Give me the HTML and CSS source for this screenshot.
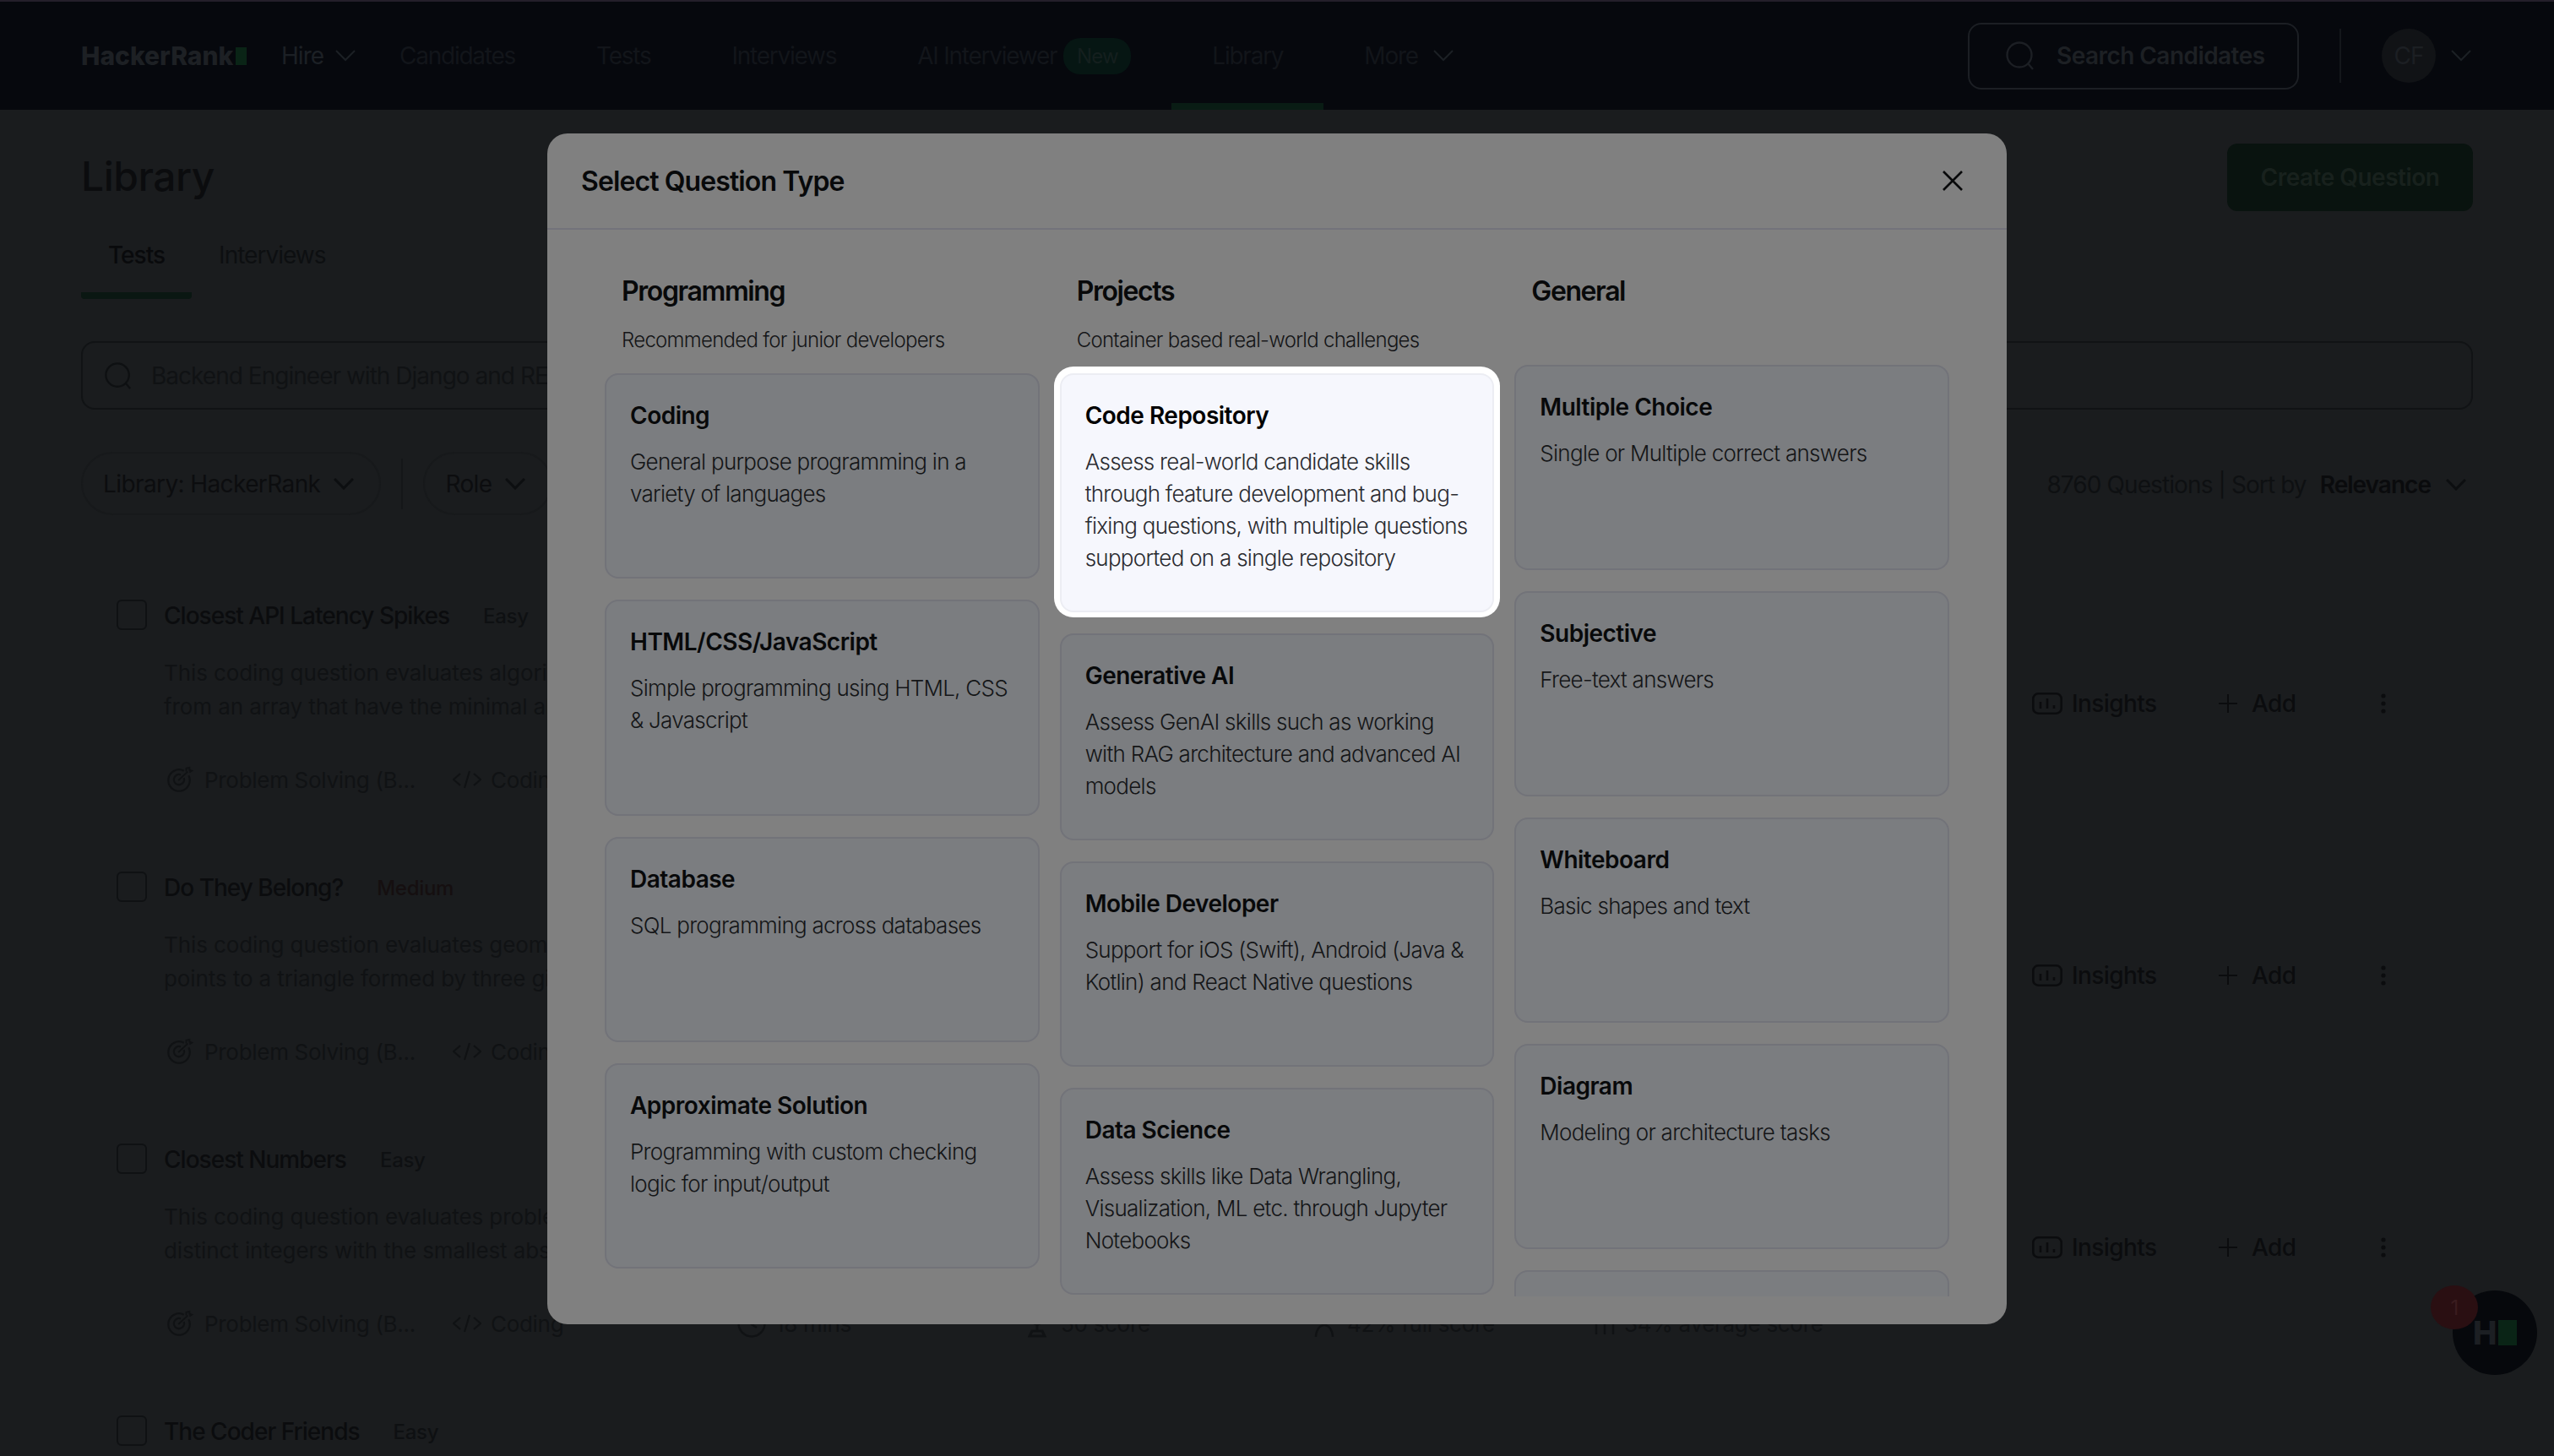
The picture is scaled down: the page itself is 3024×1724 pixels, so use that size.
FILE: index.html
```html
<!DOCTYPE html>
<html lang="en">
<head>
    <meta charset="UTF-8">
    <meta name="viewport" content="width=device-width, initial-scale=1.0">
    <title>Library - HackerRank</title>
    <link rel="stylesheet" href="styles.css">
</head>
<body>
    <svg class="sprite" aria-hidden="true">
        <symbol id="chev" viewBox="0 0 24 14"><path d="M1 1l11 11L23 1" fill="none" stroke="currentColor"/></symbol>
        <symbol id="search" viewBox="0 0 36 36"><circle cx="17" cy="17" r="14.500" fill="none" stroke="currentColor" stroke-width="2.400"/><path d="M27 27l6 7" fill="none" stroke="currentColor" stroke-width="2.400"/></symbol>
        <symbol id="target" viewBox="0 0 34 34"><path d="M28 12a13.500 13.500 0 1 1-6-6" fill="none" stroke="currentColor" stroke-width="2.400"/><path d="M22 15a6.500 6.500 0 1 1-4-4" fill="none" stroke="currentColor" stroke-width="2.400"/><path d="M15 18L27 7M25 7V3l4-1v3l3 1-3 2" fill="none" stroke="currentColor" stroke-width="2"/></symbol>
        <symbol id="code" viewBox="0 0 34 24"><path d="M9 5l-8 7 8 7M25 5l8 7-8 7M20 2l-6 20" fill="none" stroke="currentColor" stroke-width="2.200"/></symbol>
        <symbol id="clock" viewBox="0 0 36 36"><circle cx="18" cy="18" r="15.500" fill="none" stroke="currentColor" stroke-width="2.400"/><path d="M18 9v10l6 4" fill="none" stroke="currentColor" stroke-width="2.400"/></symbol>
        <symbol id="trophy" viewBox="0 0 22 36"><path d="M4 3h14v9a7 7 0 0 1-14 0zM11 19v8M2 33l3-6h12l3 6z" fill="none" stroke="currentColor" stroke-width="3"/></symbol>
        <symbol id="person" viewBox="0 0 24 36"><circle cx="12" cy="10" r="7" fill="none" stroke="currentColor" stroke-width="2.400"/><path d="M2 34a10 14 0 0 1 20 0" fill="none" stroke="currentColor" stroke-width="2.400"/></symbol>
        <symbol id="bars" viewBox="0 0 26 30"><path d="M3 16v12M13 4v24M23 11v17" fill="none" stroke="currentColor" stroke-width="2.400"/></symbol>
        <symbol id="insights" viewBox="0 0 36 26"><rect x="1.300" y="1.300" width="33.400" height="23.400" rx="6" fill="none" stroke="currentColor" stroke-width="2.600"/><path d="M10 11v8M18 7v12M26 15v4" fill="none" stroke="currentColor" stroke-width="2.600"/></symbol>
        <symbol id="plus" viewBox="0 0 24 24"><path d="M12 1v22M1 12h22" fill="none" stroke="currentColor" stroke-width="2"/></symbol>
        <symbol id="kebab" viewBox="0 0 6 24"><circle cx="3" cy="3" r="2.600" fill="currentColor"/><circle cx="3" cy="12" r="2.600" fill="currentColor"/><circle cx="3" cy="21" r="2.600" fill="currentColor"/></symbol>
    </svg>

    <header class="topnav">
        <div class="logo">HackerRank<span class="logo-mark"></span></div>
        <a class="nav-hire">Hire <svg class="chev"><use href="#chev"/></svg></a>
        <a class="nav-item">Candidates</a>
        <a class="nav-item">Tests</a>
        <a class="nav-item">Interviews</a>
        <a class="nav-item">AI Interviewer <span class="pill-new">New</span></a>
        <a class="nav-item active">Library</a>
        <a class="nav-item">More <svg class="chev"><use href="#chev"/></svg></a>
        <div class="nav-right">
            <div class="nav-search"><svg class="nav-search-icon"><use href="#search"/></svg>Search Candidates</div>
            <div class="nav-divider"></div>
            <div class="avatar">CF</div>
            <svg class="chev"><use href="#chev"/></svg>
        </div>
    </header>

    <main class="page">
        <div class="page-head">
            <h1>Library</h1>
            <button class="create-btn">Create Question</button>
        </div>
        <div class="tabs">
            <a class="tab active">Tests</a>
            <a class="tab">Interviews</a>
        </div>
        <div class="lib-search"><svg class="lib-search-icon"><use href="#search"/></svg>Backend Engineer with Django and REST APIs</div>
        <div class="filters">
            <div class="filter">Library: HackerRank <svg class="chev bold"><use href="#chev"/></svg></div>
            <div class="filter-divider"></div>
            <div class="filter">Role <svg class="chev bold"><use href="#chev"/></svg></div>
            <div class="sort">8760 Questions | Sort by <strong>Relevance</strong> <svg class="chev bold"><use href="#chev"/></svg></div>
        </div>

        <div class="q-row">
            <div class="checkbox"></div>
            <div class="q-main">
                <div class="q-title">Closest API Latency Spikes <span class="level">Easy</span></div>
                <p class="q-desc">This coding question evaluates algorithmic skills by finding pairs of elements<br>from an array that have the minimal absolute difference</p>
                <div class="q-meta">
                    <span class="meta-skill"><svg class="ic-target"><use href="#target"/></svg>Problem Solving (B...</span>
                    <span class="meta-type"><svg class="ic-code"><use href="#code"/></svg>Coding</span>
                </div>
            </div>
            <div class="q-actions">
                <span class="action-insights"><svg class="ic-insights"><use href="#insights"/></svg>Insights</span>
                <span class="action-add"><svg class="ic-plus"><use href="#plus"/></svg>Add</span>
                <svg class="ic-kebab"><use href="#kebab"/></svg>
            </div>
        </div>

        <div class="q-row">
            <div class="checkbox"></div>
            <div class="q-main">
                <div class="q-title">Do They Belong? <span class="level medium">Medium</span></div>
                <p class="q-desc">This coding question evaluates geometry skills by checking the relation of two<br>points to a triangle formed by three given vertices</p>
                <div class="q-meta">
                    <span class="meta-skill"><svg class="ic-target"><use href="#target"/></svg>Problem Solving (B...</span>
                    <span class="meta-type"><svg class="ic-code"><use href="#code"/></svg>Coding</span>
                </div>
            </div>
            <div class="q-actions">
                <span class="action-insights"><svg class="ic-insights"><use href="#insights"/></svg>Insights</span>
                <span class="action-add"><svg class="ic-plus"><use href="#plus"/></svg>Add</span>
                <svg class="ic-kebab"><use href="#kebab"/></svg>
            </div>
        </div>

        <div class="q-row">
            <div class="checkbox"></div>
            <div class="q-main">
                <div class="q-title">Closest Numbers <span class="level">Easy</span></div>
                <p class="q-desc">This coding question evaluates problem solving skills by finding pairs of<br>distinct integers with the smallest absolute difference</p>
                <div class="q-meta">
                    <span class="meta-skill"><svg class="ic-target"><use href="#target"/></svg>Problem Solving (B...</span>
                    <span class="meta-type"><svg class="ic-code"><use href="#code"/></svg>Coding</span>
                    <span class="meta-time"><svg class="ic-clock"><use href="#clock"/></svg>18 mins</span>
                    <span class="meta-score"><svg class="ic-trophy"><use href="#trophy"/></svg>50 score</span>
                    <span class="meta-full"><svg class="ic-person"><use href="#person"/></svg>42% full score</span>
                    <span class="meta-avg"><svg class="ic-bars"><use href="#bars"/></svg>34% average score</span>
                </div>
            </div>
            <div class="q-actions">
                <span class="action-insights"><svg class="ic-insights"><use href="#insights"/></svg>Insights</span>
                <span class="action-add"><svg class="ic-plus"><use href="#plus"/></svg>Add</span>
                <svg class="ic-kebab"><use href="#kebab"/></svg>
            </div>
        </div>

        <div class="q-row">
            <div class="checkbox"></div>
            <div class="q-main">
                <div class="q-title">The Coder Friends <span class="level">Easy</span></div>
            </div>
        </div>
    </main>

    <div class="chat-bubble">
        <span class="chat-h">H</span><span class="chat-mark"></span>
        <span class="chat-badge">1</span>
    </div>

    <section class="modal">
        <div class="modal-head">
            <h2>Select Question Type</h2>
            <svg class="modal-close" viewBox="0 0 24 24"><path d="M1 1l22 22M23 1L1 23" fill="none" stroke="currentColor" stroke-width="2.600"/></svg>
        </div>
        <div class="modal-body">
            <div class="type-col">
                <div class="col-head">
                    <h3>Programming</h3>
                    <p>Recommended for junior developers</p>
                </div>
                <div class="type-card">
                    <h4>Coding</h4>
                    <p>General purpose programming in a variety of languages</p>
                </div>
                <div class="type-card tall">
                    <h4>HTML/CSS/JavaScript</h4>
                    <p>Simple programming using HTML, CSS &amp; Javascript</p>
                </div>
                <div class="type-card">
                    <h4>Database</h4>
                    <p>SQL programming across databases</p>
                </div>
                <div class="type-card">
                    <h4>Approximate Solution</h4>
                    <p>Programming with custom checking logic for input/output</p>
                </div>
            </div>
            <div class="type-col">
                <div class="col-head">
                    <h3>Projects</h3>
                    <p>Container based real-world challenges</p>
                </div>
                <div class="type-card spotlight">
                    <h4>Code Repository</h4>
                    <p>Assess real-world candidate skills through feature development and bug-fixing questions, with multiple questions supported on a single repository</p>
                </div>
                <div class="type-card">
                    <h4>Generative AI</h4>
                    <p>Assess GenAI skills such as working with RAG architecture and advanced AI models</p>
                </div>
                <div class="type-card">
                    <h4>Mobile Developer</h4>
                    <p>Support for iOS (Swift), Android (Java &amp; Kotlin) and React Native questions</p>
                </div>
                <div class="type-card">
                    <h4>Data Science</h4>
                    <p>Assess skills like Data Wrangling, Visualization, ML etc. through Jupyter Notebooks</p>
                </div>
            </div>
            <div class="type-col">
                <div class="col-head">
                    <h3>General</h3>
                </div>
                <div class="type-card">
                    <h4>Multiple Choice</h4>
                    <p>Single or Multiple correct answers</p>
                </div>
                <div class="type-card">
                    <h4>Subjective</h4>
                    <p>Free-text answers</p>
                </div>
                <div class="type-card">
                    <h4>Whiteboard</h4>
                    <p>Basic shapes and text</p>
                </div>
                <div class="type-card">
                    <h4>Diagram</h4>
                    <p>Modeling or architecture tasks</p>
                </div>
                <div class="type-card">
                    <h4>File Upload</h4>
                    <p>Candidates upload a file</p>
                </div>
            </div>
        </div>
    </section>
</body>
</html>
```

FILE: styles.css
```css
* {
    box-sizing: border-box;
    letter-spacing: -0.035em;
}
html, body {
    margin: 0;
    height: 100%;
    overflow: hidden;
}
body {
    position: relative;
    font-family: Inter, "Liberation Sans", sans-serif;
    background-color: #1a1c1e;
    color: #0c0d0f;
}
.sprite {
    display: none;
}
.chev {
    width: 24px;
    height: 14px;
    stroke-width: 2;
    color: #1c2025;
}
.chev.bold {
    stroke-width: 3;
    color: #0c0e10;
}

/* top nav */
.topnav {
    display: flex;
    align-items: center;
    height: 130px;
    padding-left: 96px;
    background-color: #06080d;
    border-top: 2px solid #241f2a;
    font-size: 28px;
    letter-spacing: -1.2px;
    color: #12151a;
}
.logo {
    display: flex;
    align-items: center;
    width: 196px;
    font-size: 30px;
    font-weight: 800;
    letter-spacing: 0;
    color: #1d2024;
}
.logo-mark {
    width: 15px;
    height: 21px;
    margin-left: 3px;
    background-color: #0a2416;
}
.nav-hire {
    display: flex;
    align-items: center;
    gap: 14px;
    margin-left: 41px;
    margin-right: 4px;
    color: #1c2025;
}
.nav-item {
    display: flex;
    align-items: center;
    align-self: stretch;
    padding: 0 48px;
    position: relative;
    letter-spacing: -1.25px;
}
.nav-item .chev {
    margin-left: 18px;
}
.nav-item.active::after {
    content: "";
    position: absolute;
    left: 0;
    right: 0;
    bottom: 0;
    height: 8px;
    background-color: #091c14;
}
.pill-new {
    display: inline-flex;
    align-items: center;
    justify-content: center;
    width: 80px;
    height: 43px;
    margin-left: 8px;
    border-radius: 20px;
    background-color: #061613;
    font-size: 24px;
    color: #141f1e;
}
.nav-right {
    display: flex;
    align-items: center;
    margin-left: auto;
    padding-right: 98px;
}
.nav-search {
    display: flex;
    align-items: center;
    width: 392px;
    height: 79px;
    padding-left: 42px;
    border: 2px solid #1c1f24;
    border-radius: 16px;
    font-weight: 600;
    letter-spacing: -0.55px;
    color: #1d2024;
}
.nav-search-icon {
    width: 36px;
    height: 36px;
    margin-right: 25px;
    color: #1c1f24;
}
.nav-divider {
    width: 2px;
    height: 64px;
    margin: 0 48px;
    background-color: #14171b;
}
.avatar {
    display: flex;
    align-items: center;
    justify-content: center;
    width: 64px;
    height: 64px;
    margin-right: 18px;
    border-radius: 50%;
    background-color: #111316;
    color: #1c1f23;
}

/* library page */
.page {
    padding: 40px 96px 0;
}
.page-head {
    display: flex;
    align-items: center;
    justify-content: space-between;
    height: 80px;
}
.page-head h1 {
    margin: -4px 0 0;
    font-size: 48px;
    font-weight: 500;
    letter-spacing: -0.5px;
    color: #0b0c0e;
}
.create-btn {
    width: 291px;
    height: 80px;
    border: none;
    border-radius: 12px;
    background-color: #09130f;
    font-family: inherit;
    font-size: 28px;
    font-weight: 600;
    letter-spacing: -0.5px;
    color: #18211d;
}
.tabs {
    display: flex;
    height: 92px;
    margin-top: 12px;
    font-size: 28px;
}
.tab {
    padding: 23px 32px 0;
    color: #0d0f11;
}
.tab.active {
    font-weight: 500;
    color: #090a0c;
    border-bottom: 8px solid #0a1712;
    border-radius: 0 0 4px 4px;
}
.lib-search {
    display: flex;
    align-items: center;
    height: 81px;
    margin-top: 50px;
    padding-left: 25px;
    border: 2px solid #111315;
    border-radius: 16px;
    font-size: 28px;
    color: #101214;
}
.lib-search-icon {
    width: 34px;
    height: 34px;
    margin-right: 22px;
    color: #0e1012;
}
.filters {
    display: flex;
    align-items: center;
    height: 75px;
    margin-top: 50px;
    font-size: 28px;
    color: #0c0d0f;
}
.filter {
    display: flex;
    align-items: center;
    gap: 16px;
    height: 75px;
    padding: 0 30px 0 24px;
    border: 2px solid #17191b;
    border-radius: 38px;
    letter-spacing: -0.6px;
}
.filter-divider {
    width: 2px;
    height: 60px;
    margin: 0 24px;
    background-color: #141618;
}
.sort {
    display: flex;
    align-items: center;
    gap: 10px;
    margin-left: auto;
    padding-right: 8px;
    padding-top: 2px;
    letter-spacing: -0.9px;
    color: #0e1012;
}
.sort strong {
    margin-left: 6px;
    font-weight: 600;
    color: #0a0b0d;
}
.sort .chev {
    margin-left: 8px;
}

/* question rows */
.q-row {
    display: flex;
    margin-top: 99px;
    margin-left: 42px;
    height: 237px;
}
.q-row + .q-row {
    margin-top: 85px;
}
.checkbox {
    width: 36px;
    height: 36px;
    margin-top: 1px;
    margin-right: 20px;
    border: 2px solid #0f1113;
    border-radius: 6px;
    flex-shrink: 0;
}
.q-main {
    flex: 1;
    min-width: 0;
}
.q-title {
    display: flex;
    align-items: center;
    gap: 40px;
    height: 40px;
    font-size: 28px;
    font-weight: 500;
    color: #0b0c0e;
}
.level {
    font-size: 24px;
    letter-spacing: -0.3px;
    color: #0e1012;
}
.level.medium {
    color: #150f10;
}
.q-desc {
    margin: 28px 0 0;
    font-size: 26px;
    line-height: 40px;
    letter-spacing: -0.1px;
    color: #101214;
}
.q-meta {
    display: flex;
    align-items: center;
    height: 40px;
    margin-top: 46px;
    font-size: 26px;
    color: #101214;
}
.q-meta span {
    display: flex;
    align-items: center;
    flex-shrink: 0;
    letter-spacing: -0.3px;
}
.ic-target {
    width: 32px;
    height: 32px;
    margin: 0 13px 0 3px;
}
.ic-code {
    width: 34px;
    height: 24px;
    margin-right: 11px;
}
.meta-skill {
    width: 342px;
}
.meta-type {
    width: 336px;
}
.meta-time {
    width: 345px;
}
.meta-score {
    width: 339px;
}
.meta-full {
    width: 331px;
}
.ic-clock {
    width: 36px;
    height: 36px;
    margin-right: 10px;
}
.ic-trophy {
    width: 22px;
    height: 36px;
    margin-right: 17px;
}
.ic-person {
    width: 24px;
    height: 36px;
    margin-right: 15px;
}
.ic-bars {
    width: 26px;
    height: 30px;
    margin-right: 10px;
}
.q-actions {
    display: flex;
    align-items: center;
    align-self: flex-start;
    height: 40px;
    margin-top: 104px;
    font-size: 28px;
    font-weight: 500;
    color: #0b0c0e;
}
.q-actions span {
    display: flex;
    align-items: center;
    letter-spacing: -0.6px;
}
.ic-insights {
    width: 36px;
    height: 26px;
    margin-right: 11px;
}
.action-insights {
    width: 220px;
}
.ic-plus {
    width: 24px;
    height: 24px;
    margin-right: 16px;
}
.action-add {
    width: 193px;
}
.ic-kebab {
    width: 6px;
    height: 24px;
    margin-right: 103px;
}

/* chat widget */
.chat-bubble {
    position: absolute;
    left: 2904px;
    top: 1528px;
    width: 100px;
    height: 100px;
    display: flex;
    align-items: center;
    justify-content: center;
    border-radius: 50%;
    background-color: #06080c;
}
.chat-h {
    font-size: 38px;
    font-weight: 800;
    color: #1c1f23;
}
.chat-mark {
    width: 22px;
    height: 30px;
    margin-left: 3px;
    background-color: #0a2416;
}
.chat-badge {
    position: absolute;
    left: -26px;
    top: -6px;
    width: 56px;
    height: 52px;
    display: flex;
    align-items: center;
    justify-content: center;
    border-radius: 50%;
    background-color: #2a0f12;
    font-size: 24px;
    color: #3a1c1f;
}

/* question type modal */
.modal {
    position: absolute;
    left: 648px;
    top: 158px;
    width: 1728px;
    height: 1410px;
    display: flex;
    flex-direction: column;
    border-radius: 24px;
    background-color: #808080;
    padding-bottom: 33px;
}
.modal-head {
    display: flex;
    align-items: center;
    justify-content: space-between;
    flex-shrink: 0;
    height: 114px;
    padding: 0 52px 0 40px;
    border-bottom: 2px solid #73737b;
}
.modal-head h2 {
    margin: 0;
    font-size: 32px;
    font-weight: 600;
    letter-spacing: -0.9px;
    color: #08090a;
}
.modal-close {
    width: 24px;
    height: 24px;
    color: #08090a;
}
.modal-body {
    display: grid;
    grid-template-columns: repeat(3, 1fr);
    align-items: start;
    gap: 24px;
    flex: 1;
    min-height: 0;
    padding: 53px 68px 0;
    overflow: hidden;
}
.type-col {
    display: flex;
    flex-direction: column;
    gap: 25px;
}
.col-head {
    min-height: 82px;
    padding-left: 20px;
}
.col-head h3 {
    margin: 0;
    font-size: 32px;
    line-height: 40px;
    font-weight: 600;
    letter-spacing: -1.4px;
    color: #08090a;
}
.col-head p {
    margin: 19px 0 -5px;
    font-size: 24px;
    font-weight: 300;
    line-height: 38px;
    letter-spacing: -0.03em;
    color: #141517;
}
.type-card {
    min-height: 243px;
    padding: 29px 26px 43px 28px;
    border: 2px solid #727379;
    border-radius: 16px;
    background-color: #7b7d80;
}
.type-card.tall {
    min-height: 256px;
}
.type-card h4 {
    margin: 0;
    font-size: 28px;
    line-height: 38px;
    font-weight: 600;
    letter-spacing: -0.5px;
    color: #08090a;
}
.type-card p {
    margin: 17px 0 0;
    font-size: 26px;
    font-weight: 300;
    line-height: 38px;
    letter-spacing: -0.028em;
    color: #141517;
}
.type-card.spotlight {
    position: relative;
    background-color: #f6f7fd;
    border-color: #ecedf3;
    box-shadow: 0 -1px 0 7px #fff;
}
.type-card.spotlight h4 {
    color: #000;
}
.type-card.spotlight p {
    color: #2a2b30;
}
```
